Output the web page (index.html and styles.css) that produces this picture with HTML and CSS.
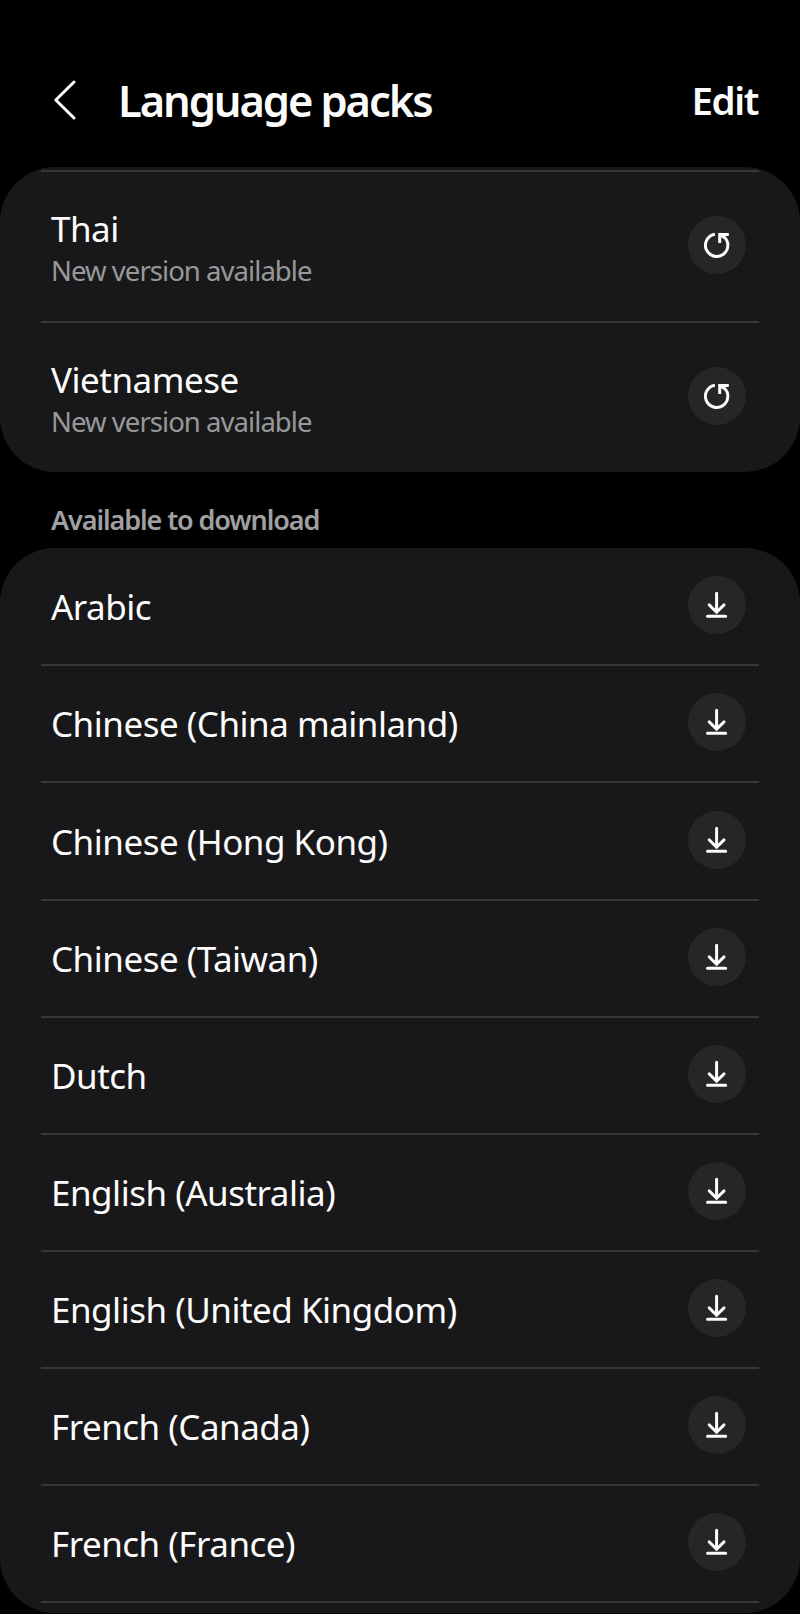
FILE: index.html
```
<!DOCTYPE html>
<html lang="en">
<head>
    <meta charset="UTF-8">
    <meta name="viewport" content="width=device-width, initial-scale=1.0">
    <title>Language packs</title>
    <link rel="stylesheet" href="styles.css">
</head>
<body>
    <!-- Shared icons -->
    <svg class="icon-defs" width="0" height="0">
        <symbol id="icon-update" viewBox="0 0 58 58">
            <path d="M26.9 18.2A11.2 11.2 0 1 0 36.2 21"/>
            <path d="M31.7 27V18.4H40.8"/>
            <path d="M32 18.8L36.8 21.8"/>
        </symbol>
        <symbol id="icon-download" viewBox="0 0 58 58">
            <path d="M28.6 17.3V36.2M21.2 28.9L28.6 36.2L36 28.9M19.5 40.3H37.7" stroke-linecap="round"/>
        </symbol>
    </svg>

    <header class="top-bar">
        <button class="back" aria-label="Back">
            <svg width="24" height="42" viewBox="0 0 24 42"><path d="M21 3L2.8 21L21 39"/></svg>
        </button>
        <h1>Language packs</h1>
        <button class="edit">Edit</button>
    </header>

    <ul class="card updates">
        <li class="row">
            <div class="label">
                <p class="name">Thai</p>
                <p class="status">New version available</p>
            </div>
            <button class="action" aria-label="Update Thai"><svg><use href="#icon-update"/></svg></button>
        </li>
        <li class="row">
            <div class="label">
                <p class="name">Vietnamese</p>
                <p class="status">New version available</p>
            </div>
            <button class="action" aria-label="Update Vietnamese"><svg><use href="#icon-update"/></svg></button>
        </li>
    </ul>

    <h2>Available to download</h2>

    <ul class="card downloads">
        <li class="row">
            <p class="name">Arabic</p>
            <button class="action" aria-label="Download"><svg><use href="#icon-download"/></svg></button>
        </li>
        <li class="row">
            <p class="name">Chinese (China mainland)</p>
            <button class="action" aria-label="Download"><svg><use href="#icon-download"/></svg></button>
        </li>
        <li class="row">
            <p class="name">Chinese (Hong Kong)</p>
            <button class="action" aria-label="Download"><svg><use href="#icon-download"/></svg></button>
        </li>
        <li class="row">
            <p class="name">Chinese (Taiwan)</p>
            <button class="action" aria-label="Download"><svg><use href="#icon-download"/></svg></button>
        </li>
        <li class="row">
            <p class="name">Dutch</p>
            <button class="action" aria-label="Download"><svg><use href="#icon-download"/></svg></button>
        </li>
        <li class="row">
            <p class="name">English (Australia)</p>
            <button class="action" aria-label="Download"><svg><use href="#icon-download"/></svg></button>
        </li>
        <li class="row">
            <p class="name">English (United Kingdom)</p>
            <button class="action" aria-label="Download"><svg><use href="#icon-download"/></svg></button>
        </li>
        <li class="row">
            <p class="name">French (Canada)</p>
            <button class="action" aria-label="Download"><svg><use href="#icon-download"/></svg></button>
        </li>
        <li class="row">
            <p class="name">French (France)</p>
            <button class="action" aria-label="Download"><svg><use href="#icon-download"/></svg></button>
        </li>
    </ul>
</body>
</html>
```
FILE: styles.css
```
/* Global Styles */
* {
    box-sizing: border-box;
    margin: 0;
    padding: 0;
}

body {
    font-family: "Noto Sans", sans-serif;
    background-color: #000;
    color: #fcfcfc;
    height: 1614px;
    overflow: hidden;
}

button {
    background: none;
    border: none;
    color: inherit;
    font-family: inherit;
    cursor: pointer;
}

svg {
    display: block;
    fill: none;
    stroke: #fcfcfc;
}

.icon-defs {
    position: absolute;
}

/* Top bar */
.top-bar {
    display: flex;
    align-items: center;
    height: 167px;
    padding: 33px 42px 0 53px;
}

.back {
    margin-right: 41px;
}

.back path {
    stroke-width: 3;
    stroke-linecap: round;
    stroke-linejoin: round;
}

h1 {
    flex: 1;
    font-size: 43.5px;
    font-weight: 600;
    line-height: 60px;
    letter-spacing: -2.1px;
}

.edit {
    font-size: 38.5px;
    font-weight: 600;
    line-height: 60px;
    letter-spacing: -1.4px;
}

/* Cards */
.card {
    list-style: none;
    background-color: #18181a;
    border-radius: 55px;
    padding: 0 41px;
}

.row {
    display: flex;
    align-items: center;
    justify-content: space-between;
    height: 117.06px;
    padding: 0 13px 0 10px;
    border-bottom: 2px solid #37373a;
}

.name {
    padding-top: 1px;
    font-size: 35px;
    line-height: 44px;
    letter-spacing: -0.5px;
}

/* Languages with a newer version */
.updates {
    height: 305px;
    padding-top: 3px;
}

.updates .row {
    height: 153px;
    border-top: 2px solid #37373a;
}

.updates .row:last-child {
    height: 149px;
    border: none;
}

.label {
    padding-top: 4px;
}

.status {
    font-size: 27.5px;
    line-height: 40px;
    letter-spacing: -0.95px;
    color: #98989b;
}

h2 {
    height: 76px;
    padding: 29px 51px 0;
    font-size: 27px;
    font-weight: 600;
    line-height: 38px;
    letter-spacing: -1.1px;
    color: #a0a0a2;
}

/* Languages to download */
.downloads {
    height: 1065px;
    padding-top: 1.4px;
}

/* Round icon button */
.action {
    width: 58px;
    height: 58px;
    margin-bottom: 3px;
    border-radius: 50%;
    background-color: #262628;
}

.action svg {
    width: 58px;
    height: 58px;
    stroke-width: 3;
}
```
